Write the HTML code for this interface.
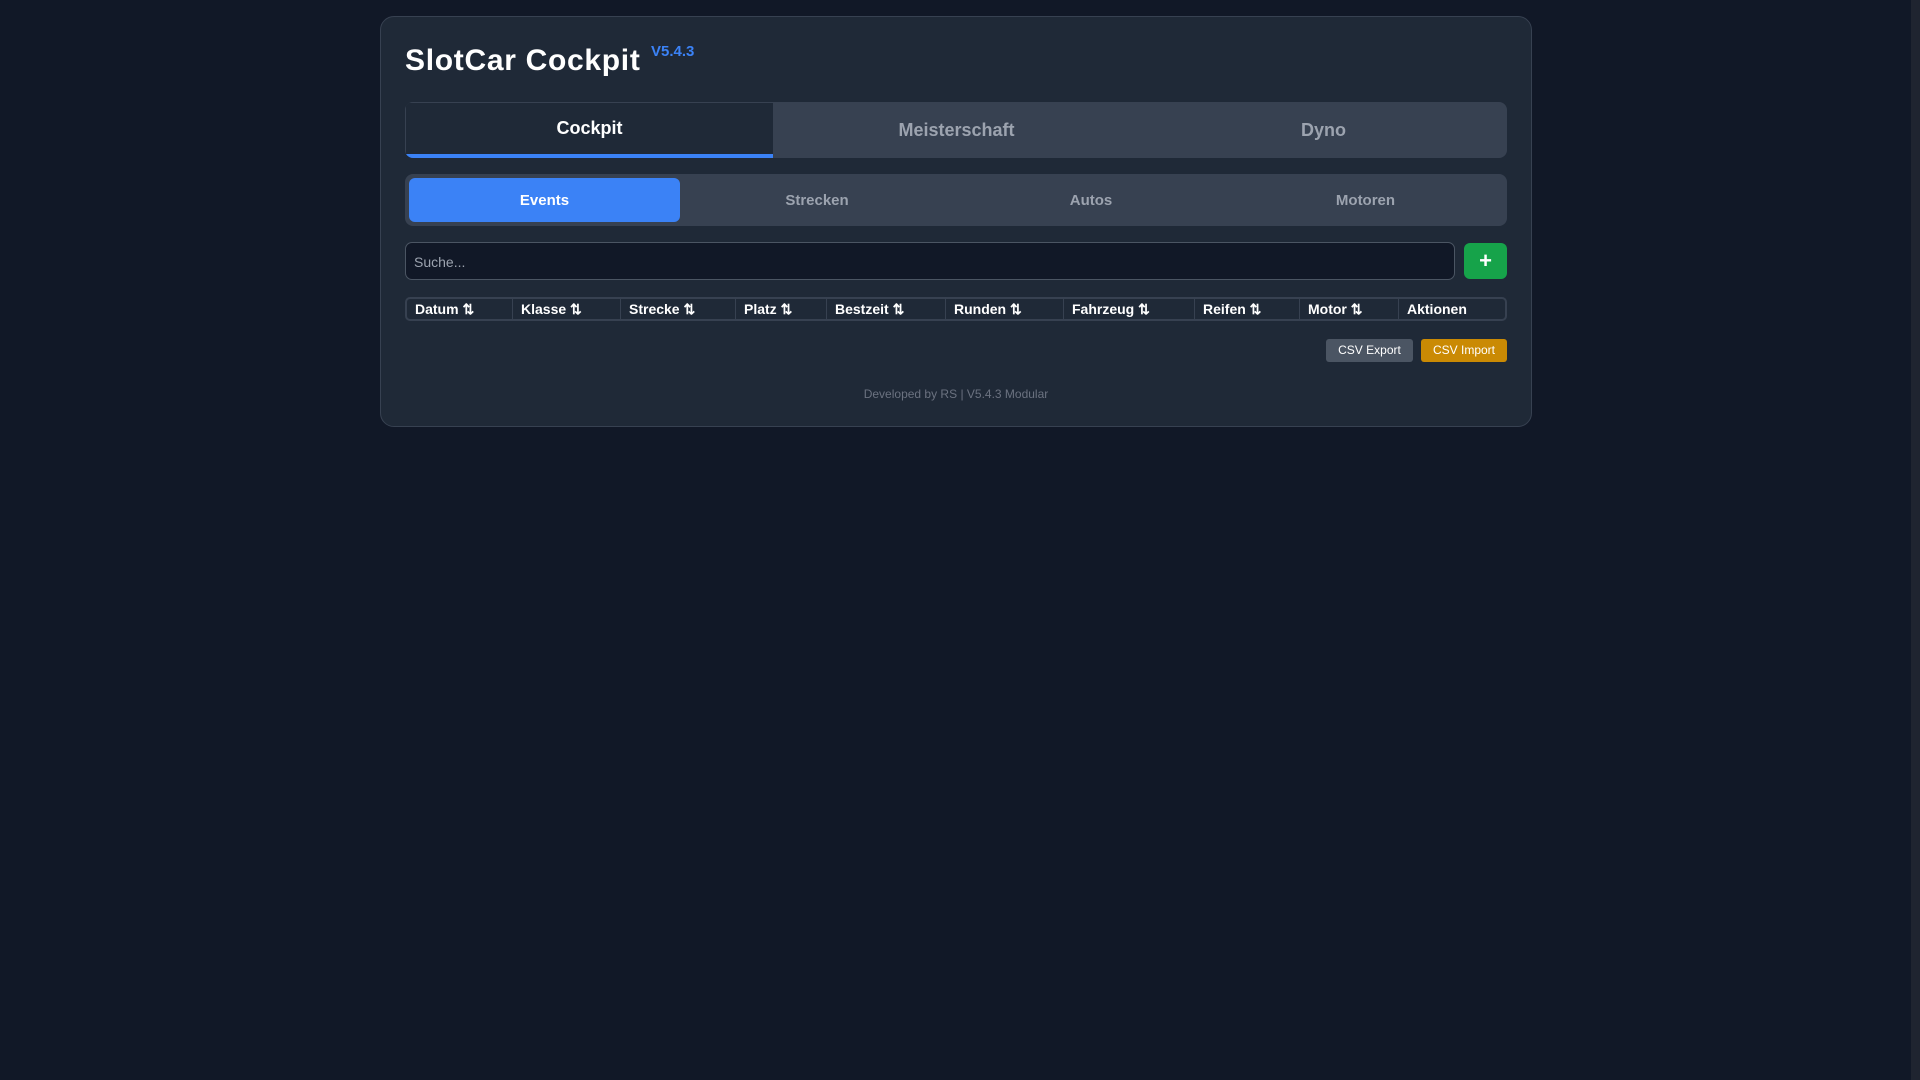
<!DOCTYPE html>
<html><head><meta charset="utf-8"><style>
*{box-sizing:border-box;margin:0;padding:0}
body{width:1920px;height:1080px;background:#111827;font-family:"Liberation Sans",Arial,sans-serif;position:relative;overflow:hidden}
.sb{position:absolute;right:0;top:0;width:9px;height:1080px;background:#1f2430}
.card{position:absolute;left:380px;top:16px;width:1152px;height:411px;background:#1f2937;border:1px solid #374151;border-radius:14px}
.abs{position:absolute}
h1{position:absolute;left:24px;top:27px;font-size:30px;font-weight:bold;color:#fff;letter-spacing:0.7px}
.ver{left:270px;top:26px;font-size:15px;font-weight:bold;color:#3b82f6}
.tabs{left:24px;top:85px;width:1102px;height:56px;background:#374151;border-radius:8px;overflow:hidden;display:flex}
.tabs div{flex:1;display:flex;align-items:center;justify-content:center;font-size:18px;font-weight:bold;color:#9ca3af}
.tabs .a{background:#1f2937;color:#fff;border-bottom:4px solid #3b82f6;border-left:1px solid #374151;border-top:1px solid #374151}
.sub{left:24px;top:157px;width:1102px;height:52px;background:#374151;border-radius:8px;display:flex;padding:4px}
.sub div{width:274px;display:flex;align-items:center;justify-content:center;font-size:15px;font-weight:bold;color:#9ca3af;border-radius:6px}
.sub div.a{width:271px;background:#3b82f6;color:#fff}
.sub div:last-child{flex:1}
.search{left:24px;top:225px;width:1050px;height:38px;background:#111827;border:1px solid #4b5563;border-radius:7px;color:#9ca3af;font-size:14px;padding:11px 8px}
.plus{left:1083px;top:226px;width:43px;height:36px;background:#16a34a;border-radius:6px;color:#fff;font-size:22px;font-weight:bold;text-align:center;line-height:35px}
.tbl{left:24px;top:280px;width:1102px;height:24px;border:2px solid #374151;border-radius:5px;display:flex;font-size:14px;font-weight:bold;color:#fff}
.tbl div{border-right:1px solid #374151;padding:2px 0 0 8px;white-space:nowrap}
.tbl div:last-child{border:none}
.btn{top:322px;height:23px;border-radius:3px;color:#fff;font-size:12px;text-align:center;line-height:23px}
.foot{left:0;width:1150px;top:370px;text-align:center;font-size:12px;color:#6b7280}
</style></head><body>
<div class="sb"></div>
<div class="card">
<h1>SlotCar Cockpit</h1>
<div class="abs ver">V5.4.3</div>
<div class="abs tabs"><div class="a">Cockpit</div><div>Meisterschaft</div><div>Dyno</div></div>
<div class="abs sub"><div class="a">Events</div><div>Strecken</div><div>Autos</div><div>Motoren</div></div>
<div class="abs search">Suche...</div>
<div class="abs plus">+</div>
<div class="abs tbl">
<div style="width:106px">Datum ⇅</div><div style="width:108px">Klasse ⇅</div><div style="width:115px">Strecke ⇅</div><div style="width:91px">Platz ⇅</div><div style="width:119px">Bestzeit ⇅</div><div style="width:118px">Runden ⇅</div><div style="width:131px">Fahrzeug ⇅</div><div style="width:105px">Reifen ⇅</div><div style="width:99px">Motor ⇅</div><div style="flex:1">Aktionen</div>
</div>
<div class="abs btn" style="left:945px;width:87px;background:#4b5563">CSV Export</div>
<div class="abs btn" style="left:1040px;width:86px;background:#ca8a04">CSV Import</div>
<div class="abs foot">Developed by RS | V5.4.3 Modular</div>
</div>
</body></html>
